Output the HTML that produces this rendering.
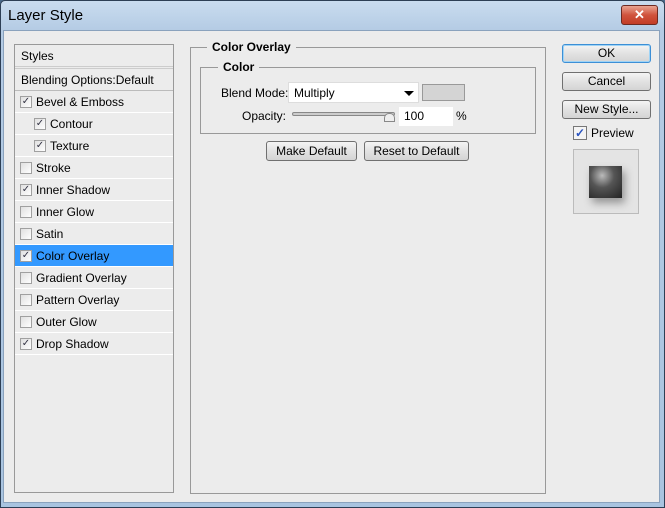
<html><head><style>
*{margin:0;padding:0;box-sizing:border-box}
body{width:665px;height:508px;overflow:hidden;font-family:"Liberation Sans",sans-serif;font-size:12px;color:#000;background:#4a6a8a;position:relative}
.win{position:absolute;left:0;top:0;width:665px;height:508px;border:1px solid #2d3f55;background:linear-gradient(#c9dcef,#b4cbe4 30px,#a9c4e0);border-radius:5px 5px 0 0}
.cl{position:absolute;left:3px;top:30px;width:657px;height:473px;background:#ececec;border:1px solid #8aa2bd}
.a{position:absolute;white-space:nowrap}
.title{left:8px;top:7px;font-size:15px;color:#000;font-family:"Liberation Sans",sans-serif}
.x{left:621px;top:5px;width:37px;height:20px;border:1px solid #6d2a22;border-radius:3px;background:linear-gradient(#e9a593,#d0533d 50%,#c23c26);color:#fff;font-weight:bold;font-size:13px;text-align:center;line-height:18px}
.list{left:14px;top:44px;width:160px;height:449px;border:1px solid #999;background:#ececec}
.row{position:absolute;left:0;width:158px;height:22px;border-bottom:1px solid #fff;line-height:22px;padding-left:21px}
.cb{position:absolute;top:5px;width:12px;height:12px;border:1px solid #a0a0a0;background:linear-gradient(135deg,#e0e0e0,#fff);font-size:10px;line-height:10px;text-align:center;color:#334}
.grp{border:1px solid #999}
.leg{background:#ececec;font-weight:bold;padding:0 5px}
.btn{border:1px solid #707070;border-radius:3px;background:linear-gradient(#f4f4f4,#e2e2e2 50%,#d4d4d4);text-align:center;font-size:12px}
</style></head><body>
<div class="win"></div>
<div class="a title">Layer Style</div>
<div class="a x">✕</div>
<div class="cl"></div>
<div class="a list">
<div class="row" style="top:0;padding-left:6px;border-bottom:3px double #ccc;height:24px">Styles</div>
<div class="row" style="top:24px;padding-left:6px;border-bottom:1px solid #bbb">Blending Options:Default</div>
<div class="row" style="top:46px"><span class="cb" style="left:5px">✓</span>Bevel &amp; Emboss</div>
<div class="row" style="top:68px;padding-left:35px"><span class="cb" style="left:19px">✓</span>Contour</div>
<div class="row" style="top:90px;padding-left:35px"><span class="cb" style="left:19px">✓</span>Texture</div>
<div class="row" style="top:112px"><span class="cb" style="left:5px"></span>Stroke</div>
<div class="row" style="top:134px"><span class="cb" style="left:5px">✓</span>Inner Shadow</div>
<div class="row" style="top:156px"><span class="cb" style="left:5px"></span>Inner Glow</div>
<div class="row" style="top:178px"><span class="cb" style="left:5px"></span>Satin</div>
<div class="row" style="top:200px;background:#3399ff"><span class="cb" style="left:5px">✓</span>Color Overlay</div>
<div class="row" style="top:222px"><span class="cb" style="left:5px"></span>Gradient Overlay</div>
<div class="row" style="top:244px"><span class="cb" style="left:5px"></span>Pattern Overlay</div>
<div class="row" style="top:266px"><span class="cb" style="left:5px"></span>Outer Glow</div>
<div class="row" style="top:288px"><span class="cb" style="left:5px">✓</span>Drop Shadow</div>
</div>
<div class="a grp" style="left:190px;top:47px;width:356px;height:447px"></div>
<div class="a leg" style="left:207px;top:40px">Color Overlay</div>
<div class="a grp" style="left:200px;top:67px;width:336px;height:67px"></div>
<div class="a leg" style="left:218px;top:60px">Color</div>
<div class="a" style="left:221px;top:86px">Blend Mode:</div>
<div class="a" style="left:288px;top:82px;width:131px;height:21px;background:#fff;border:1px solid #ddd;padding:3px 5px">Multiply</div>
<div class="a" style="left:404px;top:91px;width:0;height:0;border-left:5px solid transparent;border-right:5px solid transparent;border-top:5px solid #000"></div>
<div class="a" style="left:422px;top:84px;width:43px;height:17px;background:#d4d4d4;border:1px solid #999"></div>
<div class="a" style="left:242px;top:109px">Opacity:</div>
<div class="a" style="left:292px;top:112px;width:103px;height:4px;border:1px solid #888;border-radius:2px;background:#ccc"></div>
<div class="a" style="left:384px;top:113px;width:11px;height:9px;border:1px solid #888;border-radius:5px 5px 0 0;background:#eee"></div>
<div class="a" style="left:399px;top:107px;width:54px;height:19px;background:#fff;padding:2px 5px">100</div>
<div class="a" style="left:456px;top:109px">%</div>
<div class="a btn" style="left:266px;top:141px;width:91px;height:20px;line-height:18px">Make Default</div>
<div class="a btn" style="left:364px;top:141px;width:105px;height:20px;line-height:18px">Reset to Default</div>
<div class="a btn" style="left:562px;top:44px;width:89px;height:19px;line-height:17px;border-color:#3c8fd6;box-shadow:inset 0 0 0 1px #9fd3f5">OK</div>
<div class="a btn" style="left:562px;top:72px;width:89px;height:19px;line-height:17px">Cancel</div>
<div class="a btn" style="left:562px;top:100px;width:89px;height:19px;line-height:17px">New Style...</div>
<div class="a" style="left:573px;top:126px;width:14px;height:14px;border:1px solid #777;background:#f4f4f4;color:#2a54c0;font-weight:bold;font-size:12px;line-height:12px;text-align:center">✓</div>
<div class="a" style="left:591px;top:126px;font-size:12px">Preview</div>
<div class="a" style="left:573px;top:149px;width:66px;height:65px;border:1px solid #bbb;background:#e4e4e4"></div>
<div class="a" style="left:589px;top:166px;width:33px;height:32px;background:radial-gradient(circle at 40% 30%,#bbb,#555 40%,#222);box-shadow:3px 5px 8px rgba(0,0,0,.35)"></div>
</body></html>
